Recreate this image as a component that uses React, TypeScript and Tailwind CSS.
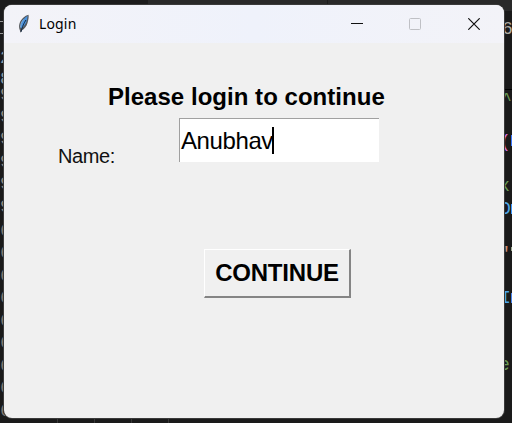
import React from 'react';

type Fragment = { text: string; y: number; color: string; x?: number };

const gutter: Fragment[] = [
  { text: '2', y: 58, color: '#8a9aa5' },
  { text: '8', y: 79, color: '#8a9aa5' },
  ...[95, 117, 139, 162, 184, 207].map((y) => ({ text: '9', y, color: '#92877f' })),
  ...[231, 253, 276, 298, 321, 343, 366, 388, 411].map((y) => ({ text: '6', y, color: '#80766f' })),
];

const code: Fragment[] = [
  { text: '6', y: 29, color: '#b0aaa2', x: 502 },
  { text: '^', y: 100, color: '#6a9955', x: 501 },
  { text: '(', y: 142, color: '#da70d6', x: 500 },
  { text: 'x', y: 186, color: '#6a9955', x: 499 },
  { text: 'D', y: 209, color: '#4fa8e8', x: 500 },
  { text: '"', y: 254, color: '#ce9178', x: 499 },
  { text: 'I', y: 298, color: '#4aa5ed', x: 500 },
  { text: 'e', y: 365, color: '#6a9955', x: 499 },
];

function EditorBackdrop() {
  return (
    <div className="absolute inset-0 overflow-hidden bg-[#1a1a1a] font-['Liberation_Mono',monospace] text-[18px] leading-none">
      <div className="h-[11px] bg-[#292929]" />
      <div className="absolute left-0 top-0 h-[50px] w-[148px] bg-[#1c1c1c]" />
      <div className="absolute left-[327px] top-0 h-[5px] w-px bg-[#1c1c1c]" />
      <div className="absolute left-0 top-[21px] h-px w-1 bg-[#999]" />
      <div className="absolute left-0 top-[33px] h-px w-1 bg-[#999]" />
      <div className="absolute right-0 top-[89px] h-px w-2 bg-black" />
      {gutter.map((f) => (
        <span key={f.y} className="absolute left-0 -translate-y-1/2" style={{ top: f.y, color: f.color }}>{f.text}</span>
      ))}
      {code.map((f) => (
        <span key={f.y} className="absolute -translate-y-1/2 whitespace-nowrap" style={{ top: f.y, left: f.x, color: f.color }}>{f.text}</span>
      ))}
      <i className="absolute right-0 top-[135px] h-[11px] w-px bg-[#3b78ff]" />
      <i className="absolute right-0 top-[204px] h-[10px] w-px bg-[#3b98ff]" />
      <i className="absolute right-0 top-[247px] h-[4px] w-px bg-[#9ca990]" />
      <i className="absolute right-0 top-[293px] h-[10px] w-px bg-[#4a85ed]" />
      {[57, 94, 131, 168].map((x) => (
        <i key={x} className="absolute bottom-0 h-1 w-px bg-[#363636]" style={{ left: x }} />
      ))}
      <i className="absolute left-[321px] top-[418px] h-px w-[2px] bg-[#a58a20]" />
      <i className="absolute left-[327px] top-[418px] h-px w-[2px] bg-[#a58a20]" />
    </div>
  );
}

function FeatherIcon() {
  return (
    <svg width="14" height="21" viewBox="0 0 14 21" className="shrink-0">
      <path d="M11.500 .8C8 1.500 4 5 2.500 9.500c-.7 2.300-.6 4.700.5 7.200l.5 2.300.7-2.200c3.500-2 5.500-4.500 6.400-8 .8-3 1.400-5.500.9-8z" fill="#55585c" />
      <path d="M10.700 1.800C7.700 3.200 5 6.600 4 10.200c-.5 1.800-.4 3.300 0 4.500C7 12.500 9 9.500 9.900 6.500z" fill="#4a92dc" />
      <path d="M9 6C7 9 5.500 12 4 18" stroke="#10253b" strokeWidth="1" fill="none" />
      <path d="M6.500 5.500c-2 2.500-3 5-2.900 8" stroke="#8fbde6" strokeWidth=".8" fill="none" />
    </svg>
  );
}

function TitleBar() {
  return (
    <header className="flex h-[38px] shrink-0 items-center bg-linear-to-r from-[#f3f3f8] via-[#eff2fb] to-[#f3f3f8] pl-[13px] text-black">
      <FeatherIcon />
      <h1 className="ml-2 flex-1 font-['Noto_Sans',sans-serif] text-[14px] leading-none tracking-[0.15px]">Login</h1>
      <button aria-label="Minimize" className="flex h-full w-[58px] items-center justify-center">
        <svg width="12" height="12" viewBox="0 0 12 12"><path d="M0 5.500h12" stroke="#111" /></svg>
      </button>
      <button aria-label="Maximize" disabled className="flex h-full w-[58px] items-center justify-center">
        <svg width="12" height="12" viewBox="0 0 12 12" fill="none"><rect x=".5" y=".5" width="11" height="11" rx="1" stroke="#bfc0c5" /></svg>
      </button>
      <button aria-label="Close" className="mr-px flex h-full w-[59px] items-center justify-center">
        <svg width="12" height="12" viewBox="0 0 12 12"><path d="M.3.3l11.400 11.400M11.700.3L.3 11.700" stroke="#111" strokeWidth="1.200" /></svg>
      </button>
    </header>
  );
}

export default function App() {
  return (
    <main className="relative h-[423px] w-[512px] overflow-hidden px-1 pt-[5px]">
      <EditorBackdrop />
      <section className="relative flex h-[413px] w-[500px] flex-col overflow-hidden rounded-lg bg-[#f0f0f0] font-['Liberation_Sans',Arial,sans-serif] text-black shadow-[0_0_0_1px_#3a3a3a]">
        <TitleBar />
        <form className="flex flex-col" onSubmit={(e) => e.preventDefault()}>
          <h2 className="ml-[104px] mt-[40px] whitespace-nowrap text-[24px] font-bold leading-[28px] tracking-[0.03px]">Please login to continue</h2>
          <div className="mt-[7px] flex h-[45px]">
            <label className="ml-[54px] mt-[27px] w-[121px] text-[20px] leading-[22px] tracking-[-0.4px] text-[#111]">Name:</label>
            <div className="flex h-[44px] w-[200px] items-center border-l border-t border-[#a0a0a0] bg-white pl-px text-[24px] leading-none">
              <span className="tracking-[-0.4px]">Anubhav</span>
              <i className="-ml-px h-[27px] w-[2px] bg-black" />
            </div>
          </div>
          <button className="ml-[200px] mt-[86px] flex h-[49px] w-[147px] items-center justify-center border-b-2 border-l border-r-2 border-t border-b-[#858585] border-l-white border-r-[#858585] border-t-white text-[24px] font-bold leading-none tracking-[-0.2px]">CONTINUE</button>
        </form>
      </section>
    </main>
  );
}
